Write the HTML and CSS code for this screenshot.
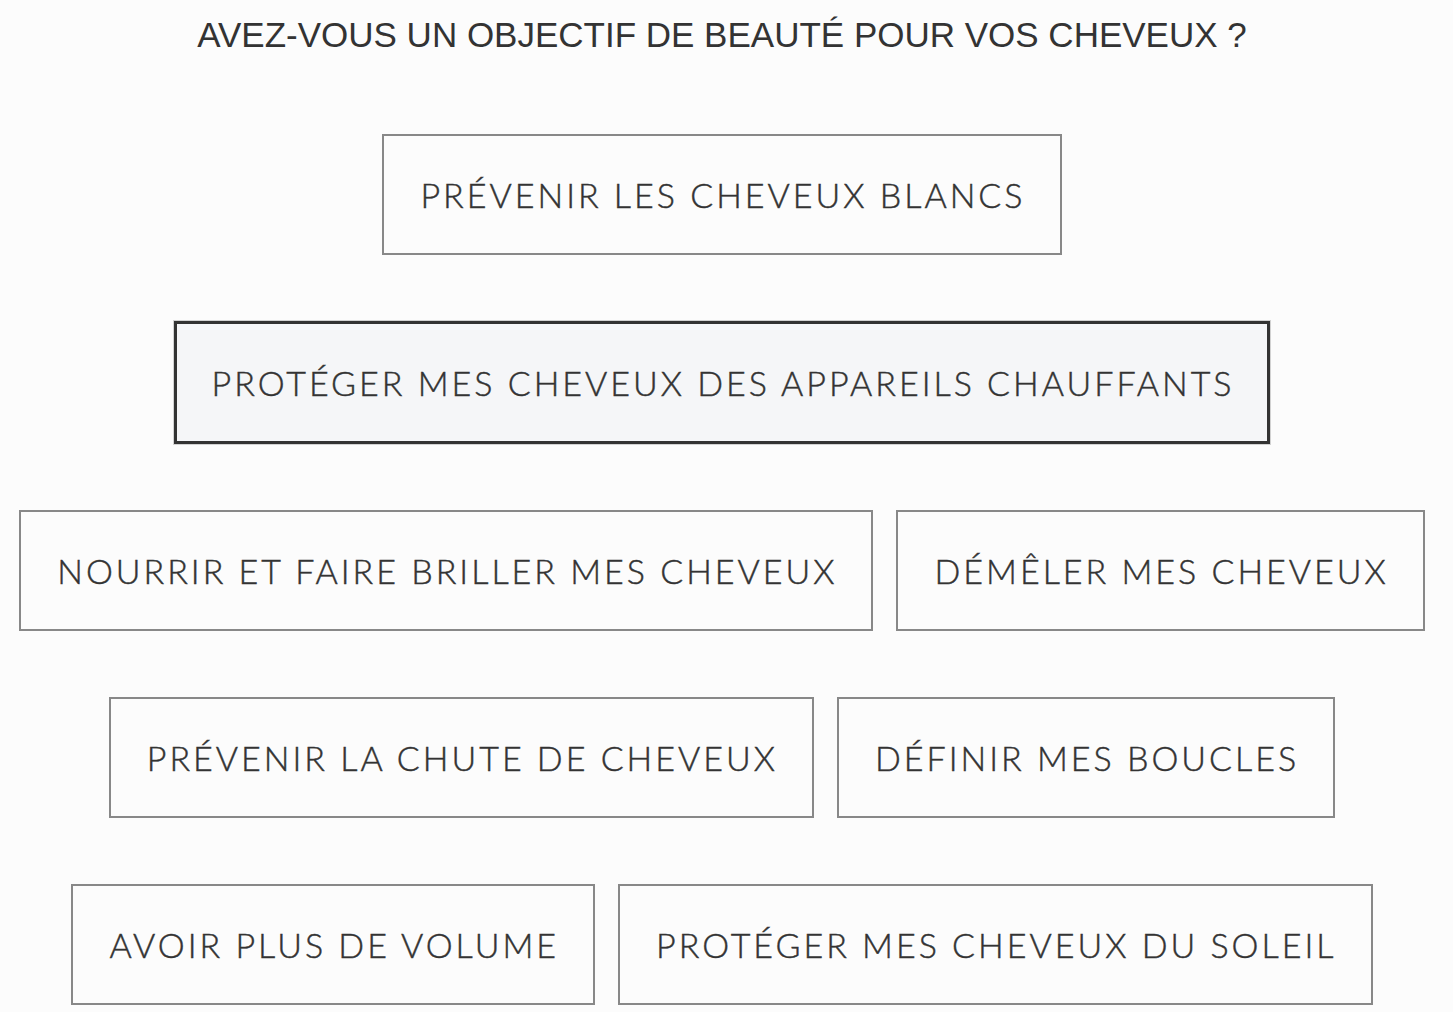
FILE: index.html
```html
<!DOCTYPE html>
<html lang="fr">
<head>
<meta charset="utf-8">
<title>Objectif beauté</title>
<link rel="stylesheet" href="styles.css">
</head>
<body>
<main class="quiz">
  <h1 class="quiz-title">AVEZ-VOUS UN OBJECTIF DE BEAUTÉ POUR VOS CHEVEUX ?</h1>
  <div class="options">
    <div class="option-row">
      <button class="option">PRÉVENIR LES CHEVEUX BLANCS</button>
    </div>
    <div class="option-row">
      <button class="option option--selected">PROTÉGER MES CHEVEUX DES APPAREILS CHAUFFANTS</button>
    </div>
    <div class="option-row">
      <button class="option">NOURRIR ET FAIRE BRILLER MES CHEVEUX</button>
      <button class="option">DÉMÊLER MES CHEVEUX</button>
    </div>
    <div class="option-row">
      <button class="option">PRÉVENIR LA CHUTE DE CHEVEUX</button>
      <button class="option">DÉFINIR MES BOUCLES</button>
    </div>
    <div class="option-row">
      <button class="option">AVOIR PLUS DE VOLUME</button>
      <button class="option">PROTÉGER MES CHEVEUX DU SOLEIL</button>
    </div>
  </div>
</main>
</body>
</html>
```
FILE: styles.css
```css
html, body {
  margin: 0;
  padding: 0;
  background: #fcfcfc;
}

.quiz {
  width: 1444px;
  padding-top: 15px;
  box-sizing: border-box;
}

.quiz-title {
  margin: 0;
  font-family: "Liberation Sans", Arial, sans-serif;
  font-weight: 400;
  font-size: 35px;
  line-height: 40px;
  color: #333333;
  text-align: center;
}

.options {
  margin-top: 79px;
  display: flex;
  flex-direction: column;
  gap: 66px;
}

.option-row {
  display: flex;
  justify-content: center;
  gap: 23px;
}

.option {
  box-sizing: border-box;
  height: 121px;
  padding: 0 34px 0 36px;
  border: 2px solid #888888;
  background: #fcfcfc;
  color: #333333;
  font-family: Lato, "Noto Sans", sans-serif;
  font-weight: 300;
  font-size: 34px;
  letter-spacing: 3px;
  -webkit-text-stroke: 0.45px #333333;
  line-height: 1;
  white-space: nowrap;
  display: flex;
  align-items: center;
  justify-content: center;
  cursor: pointer;
}

.option--selected {
  height: 123px;
  padding: 0 33px 0 35px;
  border: 3px solid #333333;
  background: #f5f6f8;
  box-shadow: 0 0 0 1px #d2d2d2;
}
```
